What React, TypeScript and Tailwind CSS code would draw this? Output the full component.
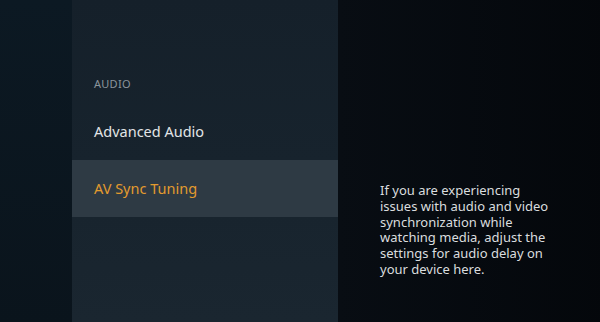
import React from "react"

const font = { fontFamily: '"Noto Sans", "Open Sans", sans-serif' }

export default function App() {
  return (
    <div
      className="flex w-[600px] h-[322px] overflow-hidden bg-[#0b1620]"
      style={font}
    >
      {/* left strip */}
      <div className="w-[72px] shrink-0 bg-gradient-to-b from-[#0c1923] to-[#0a141c]" />

      {/* menu panel */}
      <div className="w-[266px] shrink-0 flex flex-col bg-gradient-to-b from-[#15202a] via-[#17232d] to-[#1a2630]">
        <div className="h-[76px]" />
        <div className="px-[22px] h-[14px] flex items-center text-[11px] leading-none text-[#8b959c] tracking-wide">
          AUDIO
        </div>
        <div className="h-[70px] flex items-center pt-[14px] px-[22px] text-[14.5px] text-[#e2e5e7]">
          Advanced Audio
        </div>
        <div className="h-[57px] flex items-center px-[22px] bg-[#2e3a44] text-[14.5px] text-[#e39a2e]">
          AV Sync Tuning
        </div>
      </div>

      {/* description panel */}
      <div className="flex-1 bg-gradient-to-r from-[#080d13] to-[#04070b] pt-[183px] pl-[42px] pr-[50px]">
        <p className="text-[13px] leading-[15.8px] text-[#dadddf] w-[180px]">
          If you are experiencing issues with audio and video synchronization
          while watching media, adjust the settings for audio delay on your
          device here.
        </p>
      </div>
    </div>
  )
}
